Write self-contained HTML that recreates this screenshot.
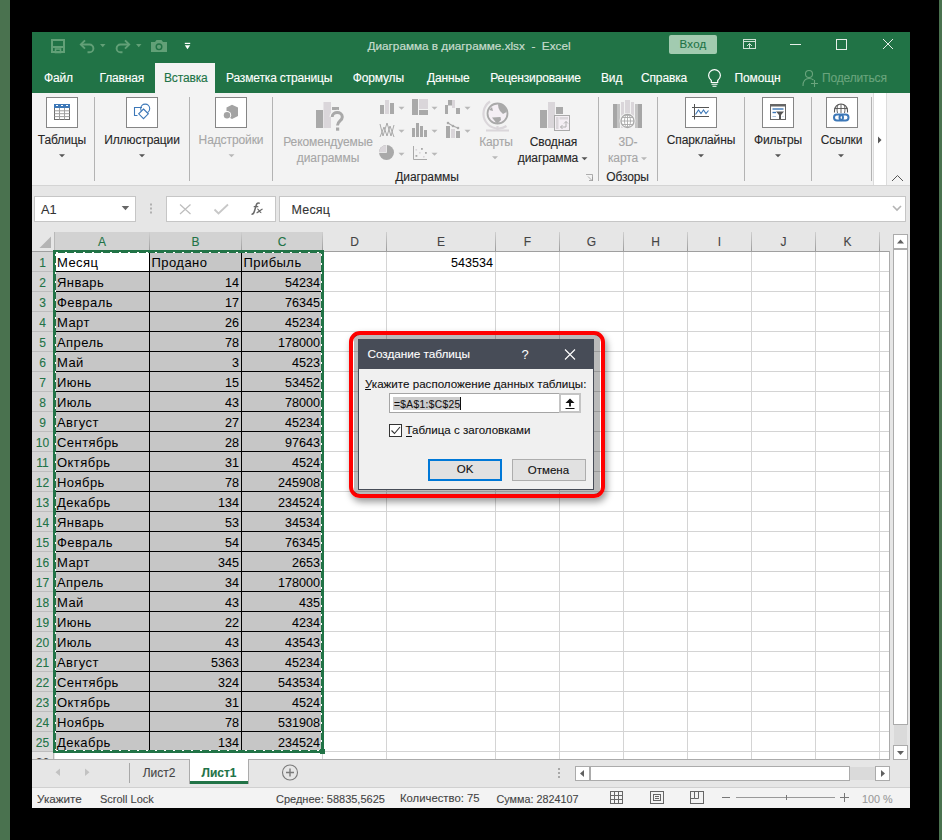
<!DOCTYPE html><html><head><meta charset="utf-8"><style>
*{margin:0;padding:0;box-sizing:border-box}
html,body{width:942px;height:840px;overflow:hidden}
body{background:#000;position:relative;font-family:"Liberation Sans",sans-serif;}
.a{position:absolute;white-space:pre}
.t{position:absolute;white-space:pre;line-height:1;-webkit-text-stroke:0.1px currentColor}
.b{-webkit-text-stroke:0.12px currentColor;letter-spacing:-0.15px}
svg{position:absolute;overflow:visible}
</style></head><body>
<div class="a" style="left:0;top:0;width:10px;height:840px;background:#4a724f"></div>
<div class="a" style="left:939px;top:0;width:3px;height:840px;background:#4a724f"></div>
<div class="a" style="left:32px;top:32px;width:878px;height:61px;background:#217346"></div>
<div class="a" style="left:32px;top:93px;width:878px;height:92px;background:#f3f3f3"></div>
<div class="a" style="left:32px;top:185px;width:878px;height:1px;background:#d4d4d4"></div>
<div class="a" style="left:32px;top:186px;width:878px;height:46px;background:#e6e6e6"></div>
<div class="a" style="left:32px;top:232px;width:878px;height:528px;background:#e6e6e6"></div>
<div class="a" style="left:32px;top:759px;width:878px;height:28px;background:#e6e6e6"></div>
<div class="a" style="left:32px;top:787px;width:878px;height:21px;background:#f3f3f3"></div>
<svg style="left:0;top:0" width="942" height="100"><rect x="52" y="40" width="12" height="12" fill="none" stroke="#62a077" stroke-width="2"/><rect x="52" y="46" width="12" height="2" fill="#62a077"/><rect x="55.5" y="49" width="5" height="3.5" fill="none" stroke="#62a077" stroke-width="1.6"/><path d="M81 44.5 H89.5 A3.9 3.9 0 0 1 89.5 52.3 H87.5" fill="none" stroke="#62a077" stroke-width="1.9"/><path d="M85 40.3 L80.8 44.5 L85 48.7" fill="none" stroke="#62a077" stroke-width="1.9"/><path d="M100 44 L105.5 44 L102.75 47.2 Z" fill="#62a077"/><path d="M129 44.5 H120.5 A3.9 3.9 0 0 0 120.5 52.3 H122.5" fill="none" stroke="#62a077" stroke-width="1.9"/><path d="M125 40.3 L129.2 44.5 L125 48.7" fill="none" stroke="#62a077" stroke-width="1.9"/><path d="M136 44 L141.5 44 L138.75 47.2 Z" fill="#62a077"/><path d="M151 42 H155 L156.5 40 H161.5 L163 42 H167 V52 H151 Z" fill="#62a077"/><circle cx="159" cy="46.8" r="2.8" fill="none" stroke="#217346" stroke-width="1.4"/><rect x="184.8" y="42.8" width="5.4" height="1.2" fill="#fff"/><path d="M184.8 45.2 H190.2 L187.5 49.3 Z" fill="#fff"/></svg>
<div class="t" style="top:39.55px;font-size:11.75px;color:#c7dccd;left:367.5px;-webkit-text-stroke:0.2px">Диаграмма в диаграмме.xlsx  -  Excel</div>
<div class="a" style="left:669px;top:35px;width:48px;height:19px;background:#a2cbb0;border-radius:2px"></div>
<div class="t" style="top:39.27px;font-size:11.5px;color:#217346;letter-spacing:0.3px;left:493px;width:400px;text-align:center;">Вход</div>
<svg style="left:0;top:0" width="942" height="100"><rect x="743.5" y="39.5" width="12" height="9" fill="none" stroke="#cfe2d5" stroke-width="1"/><path d="M743.5 41.5 H755.5" stroke="#cfe2d5" stroke-width="1"/><path d="M749.5 48.5 V43.5 M747 46 L749.5 43.5 L752 46" fill="none" stroke="#cfe2d5" stroke-width="1"/><path d="M790 44.5 H801" stroke="#e6efe9" stroke-width="1"/><rect x="836.5" y="39.5" width="10" height="10" fill="none" stroke="#e6efe9" stroke-width="1"/><path d="M883 39 L893 49 M893 39 L883 49" stroke="#e6efe9" stroke-width="1"/></svg>
<div class="t b" style="left:44px;top:72px;font-size:12px;color:#fff">Файл</div>
<div class="t b" style="left:99.5px;top:72px;font-size:12px;color:#fff">Главная</div>
<div class="t b" style="left:226px;top:72px;font-size:12px;color:#fff">Разметка страницы</div>
<div class="t b" style="left:352.7px;top:72px;font-size:12px;color:#fff">Формулы</div>
<div class="t b" style="left:427px;top:72px;font-size:12px;color:#fff">Данные</div>
<div class="t b" style="left:490.3px;top:72px;font-size:12px;color:#fff">Рецензирование</div>
<div class="t b" style="left:601px;top:72px;font-size:12px;color:#fff">Вид</div>
<div class="t b" style="left:641px;top:72px;font-size:12px;color:#fff">Справка</div>
<div class="t b" style="left:734.6px;top:72px;font-size:12px;color:#fff">Помощн</div>
<div class="a" style="left:155px;top:63px;width:60px;height:30px;background:#f3f3f3"></div>
<div class="t b" style="left:164px;top:72px;font-size:12px;color:#217346">Вставка</div>
<div class="t b" style="left:822px;top:72px;font-size:12px;color:#6aa57d">Поделиться</div>
<svg style="left:0;top:0" width="942" height="100"><path d="M711.3 80.5 C709.5 79 708.6 77.3 708.6 75.6 A5.9 5.9 0 0 1 720.4 75.6 C720.4 77.3 719.5 79 717.7 80.5 V82.5 H711.3 Z" fill="none" stroke="#fff" stroke-width="1.2"/><path d="M711.5 84.3 H717.5 M712.5 86.2 H716.5" stroke="#fff" stroke-width="1.1"/><circle cx="809" cy="74" r="3.5" fill="none" stroke="#6aa57d" stroke-width="1.1"/><path d="M803 86 C803 80 806 78.5 809 78.5 C811 78.5 812.5 79 813.5 80" fill="none" stroke="#6aa57d" stroke-width="1.1"/><path d="M811 83.5 H818 M814.5 80 V87" stroke="#6aa57d" stroke-width="1.1"/></svg>
<div class="a" style="left:46px;top:97px;width:32px;height:31px;background:#fff;border:1px solid #858585"></div>
<div class="t" style="top:133.84px;font-size:12px;color:#262626;letter-spacing:-0.1px;left:-138px;width:400px;text-align:center;">Таблицы</div>
<svg style="left:0;top:0" width="1" height="1"><path d="M59 154.2 H65 L62 157.2 Z" fill="#555"/></svg>
<div class="a" style="left:94px;top:97px;width:1px;height:84px;background:#b3b3b3;"></div>
<div class="a" style="left:126px;top:97px;width:32px;height:31px;background:#fff;border:1px solid #858585"></div>
<div class="t" style="top:133.84px;font-size:12px;color:#262626;letter-spacing:-0.1px;left:-58px;width:400px;text-align:center;">Иллюстрации</div>
<svg style="left:0;top:0" width="1" height="1"><path d="M139 154.2 H145 L142 157.2 Z" fill="#555"/></svg>
<div class="a" style="left:189px;top:97px;width:1px;height:84px;background:#b3b3b3;"></div>
<div class="a" style="left:215px;top:97px;width:32px;height:31px;background:#fff;border:1px solid #858585"></div>
<div class="t" style="top:133.84px;font-size:12px;color:#a6a6a6;letter-spacing:-0.1px;left:31px;width:400px;text-align:center;">Надстройки</div>
<svg style="left:0;top:0" width="1" height="1"><path d="M228.5 154.2 H234.5 L231.5 157.2 Z" fill="#b8b8b8"/></svg>
<div class="a" style="left:272px;top:97px;width:1px;height:84px;background:#b3b3b3;"></div>
<div class="t" style="top:135.84px;font-size:12px;color:#a6a6a6;letter-spacing:-0.1px;left:128px;width:400px;text-align:center;">Рекомендуемые</div>
<div class="t" style="top:151.84px;font-size:12px;color:#a6a6a6;letter-spacing:-0.1px;left:128px;width:400px;text-align:center;">диаграммы</div>
<div class="t" style="top:170.84px;font-size:12px;color:#262626;letter-spacing:-0.1px;left:227px;width:400px;text-align:center;">Диаграммы</div>
<div class="t" style="top:135.84px;font-size:12px;color:#a6a6a6;letter-spacing:-0.1px;left:296px;width:400px;text-align:center;">Карты</div>
<svg style="left:0;top:0" width="1" height="1"><path d="M492 156.2 H498 L495 159.2 Z" fill="#b8b8b8"/></svg>
<div class="t" style="top:135.84px;font-size:12px;color:#262626;letter-spacing:-0.1px;left:353.5px;width:400px;text-align:center;">Сводная</div>
<div class="t" style="top:151.84px;font-size:12px;color:#262626;letter-spacing:-0.1px;left:348px;width:400px;text-align:center;">диаграмма</div>
<svg style="left:0;top:0" width="1" height="1"><path d="M581.5 157.2 H587.5 L584.5 160.2 Z" fill="#555"/></svg>
<div class="a" style="left:598px;top:97px;width:1px;height:84px;background:#b3b3b3;"></div>
<div class="t" style="top:135.84px;font-size:12px;color:#a6a6a6;letter-spacing:-0.1px;left:428px;width:400px;text-align:center;">3D-</div>
<div class="t" style="top:151.84px;font-size:12px;color:#a6a6a6;letter-spacing:-0.1px;left:423px;width:400px;text-align:center;">карта</div>
<svg style="left:0;top:0" width="1" height="1"><path d="M641 157.2 H647 L644 160.2 Z" fill="#b8b8b8"/></svg>
<div class="t" style="top:170.84px;font-size:12px;color:#262626;letter-spacing:-0.1px;left:427.5px;width:400px;text-align:center;">Обзоры</div>
<div class="a" style="left:657px;top:97px;width:1px;height:84px;background:#b3b3b3;"></div>
<div class="a" style="left:685px;top:97px;width:32px;height:31px;background:#fff;border:1px solid #858585"></div>
<div class="t" style="top:133.84px;font-size:12px;color:#262626;letter-spacing:-0.1px;left:501px;width:400px;text-align:center;">Спарклайны</div>
<svg style="left:0;top:0" width="1" height="1"><path d="M698 154.2 H704 L701 157.2 Z" fill="#555"/></svg>
<div class="a" style="left:744px;top:97px;width:1px;height:84px;background:#b3b3b3;"></div>
<div class="a" style="left:762px;top:97px;width:32px;height:31px;background:#fff;border:1px solid #858585"></div>
<div class="t" style="top:133.84px;font-size:12px;color:#262626;letter-spacing:-0.1px;left:578px;width:400px;text-align:center;">Фильтры</div>
<svg style="left:0;top:0" width="1" height="1"><path d="M775 154.2 H781 L778 157.2 Z" fill="#555"/></svg>
<div class="a" style="left:811px;top:97px;width:1px;height:84px;background:#b3b3b3;"></div>
<div class="a" style="left:826px;top:97px;width:32px;height:31px;background:#fff;border:1px solid #858585"></div>
<div class="t" style="top:133.84px;font-size:12px;color:#262626;letter-spacing:-0.1px;left:641.5px;width:400px;text-align:center;">Ссылки</div>
<svg style="left:0;top:0" width="1" height="1"><path d="M838 154.2 H844 L841 157.2 Z" fill="#555"/></svg>
<div class="a" style="left:871px;top:97px;width:1px;height:84px;background:#b3b3b3;"></div>
<div class="a" style="left:873px;top:93px;width:14px;height:92px;background:#fff;border-left:1px solid #dcdcdc;border-right:1px solid #dcdcdc"></div>
<svg style="left:0;top:0" width="1" height="1"><path d="M878 136.5 L881.5 140 L878 143.5 Z" fill="#555"/><path d="M892 181 L897.5 175.5 L903 181" fill="none" stroke="#555" stroke-width="1"/><path d="M586 174.5 H592.5 V181 M588 176.5 L592 180.5 M589 180.5 H592.5 V177" fill="none" stroke="#9a9a9a" stroke-width="0.8"/></svg>
<svg style="left:0;top:0" width="1" height="1"><rect x="54.5" y="104.5" width="15" height="15" fill="#fff" stroke="#6b6b6b"/><rect x="54" y="104" width="16" height="4" fill="#3d78b8"/><path d="M54.5 110.8 H69.5 M54.5 113.7 H69.5 M54.5 116.6 H69.5 M59.5 108 V119.5 M64.5 108 V119.5" stroke="#a0a0a0" stroke-width="1"/><path d="M56 105.5 H58 M61 105.5 H63 M66 105.5 H68" stroke="#fff" stroke-width="1"/><path d="M142 107.5 H134.5 V115.5 H137.5" fill="none" stroke="#3d78b8" stroke-width="1.1"/><circle cx="145.2" cy="108.6" r="4.5" fill="none" stroke="#3d78b8" stroke-width="1.1"/><path d="M143.5 109 L148.3 113.8 L143.5 118.6 L138.7 113.8 Z" fill="#fff" stroke="#3d78b8" stroke-width="1.1"/><path d="M232 104.7 L238 107.5 L238 116 L232 119 L226.5 116 L226.5 107.5 Z" fill="#a3a3a3"/><circle cx="227" cy="115.3" r="4.2" fill="#fff"/><circle cx="227" cy="115.3" r="3.2" fill="#a3a3a3"/><rect x="316" y="110" width="7" height="18" fill="#a9a9a9"/><rect x="323.5" y="102" width="7.5" height="26" fill="#dad6da"/><rect x="332" y="107" width="7" height="3" fill="#a9a9a9"/><path d="M332.2 117 C332.2 111 342.3 111 342.3 117 C342.3 121 337.5 121 337.5 125.5" fill="none" stroke="#f3f3f3" stroke-width="5.5"/><path d="M332.2 117 C332.2 111 342.3 111 342.3 117 C342.3 121 337.5 121 337.5 125.5" fill="none" stroke="#a9a9a9" stroke-width="3"/><rect x="336" y="127.5" width="3.2" height="3.2" fill="#a9a9a9"/><rect x="380" y="105" width="4" height="9" fill="#a9a9a9"/><rect x="385" y="100" width="4" height="14" fill="#dad6da"/><rect x="390" y="103" width="4" height="11" fill="#a9a9a9"/><rect x="412" y="99" width="6" height="16" fill="#a9a9a9"/><rect x="419" y="99" width="9" height="10" fill="#dad6da"/><rect x="419" y="110" width="9" height="5" fill="#a9a9a9"/><rect x="445" y="105" width="3" height="9" fill="#a9a9a9"/><rect x="448" y="100" width="4" height="5" fill="#a9a9a9"/><rect x="452" y="100" width="3" height="8" fill="#dad6da"/><rect x="456" y="108" width="4" height="6" fill="#a9a9a9"/><path d="M448 105 H452" stroke="#a9a9a9"/><path d="M380 124 L383 136 L387 123 L391 136 L394 125 M380 137 L384 127 L387 136 L390 126 L394 137" fill="none" stroke="#a9a9a9" stroke-width="1"/><rect x="412" y="128" width="3" height="9" fill="#a9a9a9"/><rect x="416" y="123" width="3" height="14" fill="#a9a9a9"/><rect x="420" y="126" width="3" height="11" fill="#a9a9a9"/><rect x="424" y="130" width="3" height="7" fill="#a9a9a9"/><rect x="446" y="126" width="4" height="12" fill="#a9a9a9"/><rect x="451" y="129" width="4" height="9" fill="#dad6da"/><rect x="456" y="131" width="4" height="7" fill="#a9a9a9"/><path d="M448 123 L453 126 L458 128" fill="none" stroke="#a9a9a9" stroke-width="1.2"/><circle cx="448" cy="123" r="1.3" fill="#a9a9a9"/><circle cx="453" cy="126" r="1.3" fill="#a9a9a9"/><circle cx="458" cy="128" r="1.3" fill="#a9a9a9"/><circle cx="386.5" cy="152.5" r="7.5" fill="#a9a9a9"/><path d="M386.5 152.5 V145 A7.5 7.5 0 0 0 379 152.5 Z" fill="#dad6da"/><path d="M386.5 145 V152.5 H379" fill="none" stroke="#f3f3f3" stroke-width="0.8"/><path d="M413.5 146 V159.5 H427" fill="none" stroke="#a9a9a9" stroke-width="1"/><rect x="415.5" y="149" width="1.6" height="1.6" fill="#dad6da"/><rect x="421" y="148" width="1.8" height="1.8" fill="#a9a9a9"/><rect x="419" y="152" width="1.6" height="1.6" fill="#dad6da"/><rect x="425" y="152" width="1.8" height="1.8" fill="#a9a9a9"/><rect x="415.5" y="155" width="1.8" height="1.8" fill="#a9a9a9"/><rect x="423" y="156" width="1.6" height="1.6" fill="#dad6da"/><path d="M490 101.5 A14 14 0 0 0 506.5 126" fill="none" stroke="#dad6da" stroke-width="2.2"/><circle cx="497.5" cy="113.5" r="10" fill="#f4eff4" stroke="#a9a9a9" stroke-width="1.8"/><path d="M498 104.5 C502 103.5 506.5 107 506.5 112 L503 114 L500 111 L498.5 108 Z" fill="#a9a9a9"/><path d="M492 117.5 L500.5 117 L501 120 L497.5 123.5 L495.5 122 Z" fill="#a9a9a9"/><path d="M489 110 L492 107 L493 111 Z" fill="#a9a9a9"/><path d="M497.5 126 V130 M486 130.5 H509" stroke="#dad6da" stroke-width="2.2"/><rect x="540" y="110" width="7" height="18" fill="#a9a9a9"/><rect x="548" y="102" width="7" height="26" fill="#dad6da"/><rect x="556" y="107" width="7" height="7" fill="#a9a9a9"/><rect x="554.5" y="115.5" width="15" height="15" fill="#f4eff4" stroke="#a9a9a9" stroke-width="1"/><rect x="556" y="117" width="2.5" height="12" fill="#dad6da"/><rect x="559.5" y="117" width="8.5" height="2.5" fill="#dad6da"/><path d="M560.5 127 H566 V121.5 M564 123.5 L566 121.5 L568 123.5 M562.5 125 L560.5 127 L562.5 129" fill="none" stroke="#a9a9a9" stroke-width="0.9"/><rect x="613" y="104" width="4" height="24" fill="#a6a6a6"/><rect x="617" y="104" width="3" height="24" fill="#c4c4c4"/><rect x="621" y="102" width="3" height="26" fill="#dad6da"/><rect x="625" y="100" width="5" height="22" fill="#dad6da"/><rect x="631" y="102" width="3" height="22" fill="#dad6da"/><rect x="635" y="104" width="3" height="24" fill="#c4c4c4"/><rect x="638" y="104" width="4" height="24" fill="#a6a6a6"/><circle cx="627.5" cy="121" r="8" fill="#f3f3f3"/><circle cx="627.5" cy="121" r="6.5" fill="#fff" stroke="#a9a9a9" stroke-width="1.3"/><path d="M621 121 H634 M622 117.5 H633 M622 124.5 H633 M627.5 114.5 V127.5" stroke="#a9a9a9" stroke-width="0.9"/><ellipse cx="627.5" cy="121" rx="3" ry="6.5" fill="none" stroke="#a9a9a9" stroke-width="0.9"/><path d="M694.5 104 V119.5 M692 107.5 H709 M692 116.5 H709" fill="none" stroke="#555" stroke-width="1"/><path d="M695.5 114.5 L698.5 110 L701 113.5 L703.5 110 L706 113.5 L708.5 110.5" fill="none" stroke="#3d78b8" stroke-width="1.1"/><rect x="770.5" y="104.5" width="15" height="15" fill="#fff" stroke="#666" stroke-width="1"/><rect x="770" y="104" width="16" height="2.5" fill="#666"/><path d="M772.5 109 H783.5" stroke="#3d78b8" stroke-width="1.4"/><path d="M772.5 112.5 H776" stroke="#3d78b8" stroke-width="1.4"/><path d="M772.5 116.5 H776 M782.5 116.5 H783.5" stroke="#a8c2e0" stroke-width="1.1"/><path d="M776 111.5 H784 L781 115 V119 H779 V115 Z" fill="#555"/><path d="M834.5 112.5 V110.5 A6.5 6.5 0 0 1 847.5 110.5 V112.5" fill="#fff" stroke="#555" stroke-width="1.1"/><path d="M834.5 108.5 H847.5 M841 104 V113 M838 104.8 C836.8 107.5 836.8 110 837.5 113 M844 104.8 C845.2 107.5 845.2 110 844.5 113" fill="none" stroke="#555" stroke-width="0.9"/><rect x="834" y="114.5" width="9" height="6" rx="3" fill="none" stroke="#3d78b8" stroke-width="2"/><rect x="839.5" y="114.5" width="9" height="6" rx="3" fill="none" stroke="#3d78b8" stroke-width="2"/></svg>
<svg style="left:0;top:0" width="1" height="1"><path d="M398.5 106.7 H404.5 L401.5 109.7 Z" fill="#b8b8b8"/></svg>
<svg style="left:0;top:0" width="1" height="1"><path d="M431.5 106.7 H437.5 L434.5 109.7 Z" fill="#b8b8b8"/></svg>
<svg style="left:0;top:0" width="1" height="1"><path d="M464.5 106.7 H470.5 L467.5 109.7 Z" fill="#b8b8b8"/></svg>
<svg style="left:0;top:0" width="1" height="1"><path d="M398.5 129.7 H404.5 L401.5 132.7 Z" fill="#b8b8b8"/></svg>
<svg style="left:0;top:0" width="1" height="1"><path d="M431.5 129.7 H437.5 L434.5 132.7 Z" fill="#b8b8b8"/></svg>
<svg style="left:0;top:0" width="1" height="1"><path d="M464.5 129.7 H470.5 L467.5 132.7 Z" fill="#b8b8b8"/></svg>
<svg style="left:0;top:0" width="1" height="1"><path d="M398.5 152.7 H404.5 L401.5 155.7 Z" fill="#b8b8b8"/></svg>
<svg style="left:0;top:0" width="1" height="1"><path d="M431.5 152.7 H437.5 L434.5 155.7 Z" fill="#b8b8b8"/></svg>
<div class="a" style="left:34px;top:196px;width:102px;height:26px;background:#fff;border:1px solid #c6c6c6"></div>
<div class="t" style="top:203.86px;font-size:12.8px;color:#333;left:41px;">A1</div>
<svg style="left:0;top:0" width="1" height="1"><path d="M121.7 206 H129.2 L125.45 210.2 Z" fill="#666"/><rect x="150" y="203.5" width="2" height="2" fill="#b0b0b0"/><rect x="150" y="207.5" width="2" height="2" fill="#b0b0b0"/><rect x="150" y="211.5" width="2" height="2" fill="#b0b0b0"/></svg>
<div class="a" style="left:166px;top:196px;width:110px;height:26px;background:#fff;border:1px solid #c6c6c6"></div>
<div class="a" style="left:279px;top:196px;width:627px;height:26px;background:#fff;border:1px solid #c6c6c6"></div>
<svg style="left:0;top:0" width="1" height="1"><path d="M180 204.5 L190.5 214 M190.5 204.5 L180 214" stroke="#bdbdbd" stroke-width="1.2"/><path d="M214.5 209.5 L218.5 213.5 L228 204.5" fill="none" stroke="#c8c8c8" stroke-width="1.8"/><path d="M893 206 L897 210 L901 206" fill="none" stroke="#b4b4b4" stroke-width="1.6"/></svg>
<svg style="left:0;top:0" width="1" height="1"><path d="M251.5 214.3 C253.3 214.5 253.9 213.3 254.4 211.3 L256.3 205 C256.8 203.3 258 202.7 259.8 203.4" fill="none" stroke="#6a6a6a" stroke-width="1.5"/><path d="M253.7 206.6 H258.3" stroke="#6a6a6a" stroke-width="1.3"/><path d="M257.3 209.2 C258.8 208.8 259.6 212.6 261.3 212.6 M262.6 209 C261 209.6 258.5 212.2 256.6 212.8" fill="none" stroke="#6a6a6a" stroke-width="1.3"/></svg>
<div class="t" style="top:203.92px;font-size:12.5px;color:#333;letter-spacing:0.2px;left:291.5px;">Месяц</div>
<div class="a" style="left:32px;top:232px;width:857px;height:19px;background:#e6e6e6;"></div>
<div class="a" style="left:55px;top:232px;width:267px;height:18px;background:#d2d2d2;"></div>
<div class="a" style="left:32px;top:251px;width:857px;height:1px;background:#9f9f9f;"></div>
<div class="a" style="left:149px;top:232px;width:1px;height:19px;background:linear-gradient(#cfcfcf,#9c9c9c);"></div>
<div class="a" style="left:241px;top:232px;width:1px;height:19px;background:linear-gradient(#cfcfcf,#9c9c9c);"></div>
<div class="a" style="left:322px;top:232px;width:1px;height:19px;background:linear-gradient(#cfcfcf,#9c9c9c);"></div>
<div class="a" style="left:386px;top:232px;width:1px;height:19px;background:linear-gradient(#cfcfcf,#9c9c9c);"></div>
<div class="a" style="left:495px;top:232px;width:1px;height:19px;background:linear-gradient(#cfcfcf,#9c9c9c);"></div>
<div class="a" style="left:559px;top:232px;width:1px;height:19px;background:linear-gradient(#cfcfcf,#9c9c9c);"></div>
<div class="a" style="left:623px;top:232px;width:1px;height:19px;background:linear-gradient(#cfcfcf,#9c9c9c);"></div>
<div class="a" style="left:687px;top:232px;width:1px;height:19px;background:linear-gradient(#cfcfcf,#9c9c9c);"></div>
<div class="a" style="left:751px;top:232px;width:1px;height:19px;background:linear-gradient(#cfcfcf,#9c9c9c);"></div>
<div class="a" style="left:815px;top:232px;width:1px;height:19px;background:linear-gradient(#cfcfcf,#9c9c9c);"></div>
<div class="a" style="left:879px;top:232px;width:1px;height:19px;background:linear-gradient(#cfcfcf,#9c9c9c);"></div>
<div class="a" style="left:54px;top:232px;width:1px;height:20px;background:#b9b9b9;"></div>
<div class="t" style="top:235.84px;font-size:12px;color:#217346;left:-98.0px;width:400px;text-align:center;-webkit-text-stroke:0.1px">A</div>
<div class="t" style="top:235.84px;font-size:12px;color:#217346;left:-4.5px;width:400px;text-align:center;-webkit-text-stroke:0.1px">B</div>
<div class="t" style="top:235.84px;font-size:12px;color:#217346;left:82.0px;width:400px;text-align:center;-webkit-text-stroke:0.1px">C</div>
<div class="t" style="top:235.84px;font-size:12px;color:#444;left:154.5px;width:400px;text-align:center;-webkit-text-stroke:0.1px">D</div>
<div class="t" style="top:235.84px;font-size:12px;color:#444;left:241.0px;width:400px;text-align:center;-webkit-text-stroke:0.1px">E</div>
<div class="t" style="top:235.84px;font-size:12px;color:#444;left:327.5px;width:400px;text-align:center;-webkit-text-stroke:0.1px">F</div>
<div class="t" style="top:235.84px;font-size:12px;color:#444;left:391.5px;width:400px;text-align:center;-webkit-text-stroke:0.1px">G</div>
<div class="t" style="top:235.84px;font-size:12px;color:#444;left:455.5px;width:400px;text-align:center;-webkit-text-stroke:0.1px">H</div>
<div class="t" style="top:235.84px;font-size:12px;color:#444;left:519.5px;width:400px;text-align:center;-webkit-text-stroke:0.1px">I</div>
<div class="t" style="top:235.84px;font-size:12px;color:#444;left:583.5px;width:400px;text-align:center;-webkit-text-stroke:0.1px">J</div>
<div class="t" style="top:235.84px;font-size:12px;color:#444;left:647.5px;width:400px;text-align:center;-webkit-text-stroke:0.1px">K</div>
<svg style="left:0;top:0" width="1" height="1"><path d="M51 236.5 V248 H39.5 Z" fill="#b4b4b4"/></svg>
<div class="a" style="left:32px;top:252px;width:22px;height:508px;background:#e6e6e6;"></div>
<div class="a" style="left:32px;top:252px;width:21px;height:499px;background:#d6d6d6;"></div>
<div class="a" style="left:53px;top:252px;width:1px;height:507px;background:#b9b9b9;"></div>
<div class="a" style="left:55px;top:252px;width:834px;height:507px;background:#fff;"></div>
<div class="a" style="left:55px;top:252px;width:267px;height:499px;background:#c6c6c6;"></div>
<div class="a" style="left:55px;top:252px;width:94px;height:19px;background:#fff;"></div>
<div class="a" style="left:32px;top:271px;width:21px;height:1px;background:#bdbdbd;"></div>
<div class="a" style="left:55px;top:271px;width:834px;height:1px;background:#d4d4d4;"></div>
<div class="a" style="left:32px;top:291px;width:21px;height:1px;background:#bdbdbd;"></div>
<div class="a" style="left:55px;top:291px;width:834px;height:1px;background:#d4d4d4;"></div>
<div class="a" style="left:32px;top:311px;width:21px;height:1px;background:#bdbdbd;"></div>
<div class="a" style="left:55px;top:311px;width:834px;height:1px;background:#d4d4d4;"></div>
<div class="a" style="left:32px;top:331px;width:21px;height:1px;background:#bdbdbd;"></div>
<div class="a" style="left:55px;top:331px;width:834px;height:1px;background:#d4d4d4;"></div>
<div class="a" style="left:32px;top:351px;width:21px;height:1px;background:#bdbdbd;"></div>
<div class="a" style="left:55px;top:351px;width:834px;height:1px;background:#d4d4d4;"></div>
<div class="a" style="left:32px;top:371px;width:21px;height:1px;background:#bdbdbd;"></div>
<div class="a" style="left:55px;top:371px;width:834px;height:1px;background:#d4d4d4;"></div>
<div class="a" style="left:32px;top:391px;width:21px;height:1px;background:#bdbdbd;"></div>
<div class="a" style="left:55px;top:391px;width:834px;height:1px;background:#d4d4d4;"></div>
<div class="a" style="left:32px;top:411px;width:21px;height:1px;background:#bdbdbd;"></div>
<div class="a" style="left:55px;top:411px;width:834px;height:1px;background:#d4d4d4;"></div>
<div class="a" style="left:32px;top:431px;width:21px;height:1px;background:#bdbdbd;"></div>
<div class="a" style="left:55px;top:431px;width:834px;height:1px;background:#d4d4d4;"></div>
<div class="a" style="left:32px;top:451px;width:21px;height:1px;background:#bdbdbd;"></div>
<div class="a" style="left:55px;top:451px;width:834px;height:1px;background:#d4d4d4;"></div>
<div class="a" style="left:32px;top:471px;width:21px;height:1px;background:#bdbdbd;"></div>
<div class="a" style="left:55px;top:471px;width:834px;height:1px;background:#d4d4d4;"></div>
<div class="a" style="left:32px;top:491px;width:21px;height:1px;background:#bdbdbd;"></div>
<div class="a" style="left:55px;top:491px;width:834px;height:1px;background:#d4d4d4;"></div>
<div class="a" style="left:32px;top:511px;width:21px;height:1px;background:#bdbdbd;"></div>
<div class="a" style="left:55px;top:511px;width:834px;height:1px;background:#d4d4d4;"></div>
<div class="a" style="left:32px;top:531px;width:21px;height:1px;background:#bdbdbd;"></div>
<div class="a" style="left:55px;top:531px;width:834px;height:1px;background:#d4d4d4;"></div>
<div class="a" style="left:32px;top:551px;width:21px;height:1px;background:#bdbdbd;"></div>
<div class="a" style="left:55px;top:551px;width:834px;height:1px;background:#d4d4d4;"></div>
<div class="a" style="left:32px;top:571px;width:21px;height:1px;background:#bdbdbd;"></div>
<div class="a" style="left:55px;top:571px;width:834px;height:1px;background:#d4d4d4;"></div>
<div class="a" style="left:32px;top:591px;width:21px;height:1px;background:#bdbdbd;"></div>
<div class="a" style="left:55px;top:591px;width:834px;height:1px;background:#d4d4d4;"></div>
<div class="a" style="left:32px;top:611px;width:21px;height:1px;background:#bdbdbd;"></div>
<div class="a" style="left:55px;top:611px;width:834px;height:1px;background:#d4d4d4;"></div>
<div class="a" style="left:32px;top:631px;width:21px;height:1px;background:#bdbdbd;"></div>
<div class="a" style="left:55px;top:631px;width:834px;height:1px;background:#d4d4d4;"></div>
<div class="a" style="left:32px;top:651px;width:21px;height:1px;background:#bdbdbd;"></div>
<div class="a" style="left:55px;top:651px;width:834px;height:1px;background:#d4d4d4;"></div>
<div class="a" style="left:32px;top:671px;width:21px;height:1px;background:#bdbdbd;"></div>
<div class="a" style="left:55px;top:671px;width:834px;height:1px;background:#d4d4d4;"></div>
<div class="a" style="left:32px;top:691px;width:21px;height:1px;background:#bdbdbd;"></div>
<div class="a" style="left:55px;top:691px;width:834px;height:1px;background:#d4d4d4;"></div>
<div class="a" style="left:32px;top:711px;width:21px;height:1px;background:#bdbdbd;"></div>
<div class="a" style="left:55px;top:711px;width:834px;height:1px;background:#d4d4d4;"></div>
<div class="a" style="left:32px;top:731px;width:21px;height:1px;background:#bdbdbd;"></div>
<div class="a" style="left:55px;top:731px;width:834px;height:1px;background:#d4d4d4;"></div>
<div class="a" style="left:32px;top:751px;width:21px;height:1px;background:#bdbdbd;"></div>
<div class="a" style="left:55px;top:751px;width:834px;height:1px;background:#d4d4d4;"></div>
<div class="a" style="left:322px;top:252px;width:1px;height:507px;background:#d4d4d4;"></div>
<div class="a" style="left:386px;top:252px;width:1px;height:507px;background:#d4d4d4;"></div>
<div class="a" style="left:495px;top:252px;width:1px;height:507px;background:#d4d4d4;"></div>
<div class="a" style="left:559px;top:252px;width:1px;height:507px;background:#d4d4d4;"></div>
<div class="a" style="left:623px;top:252px;width:1px;height:507px;background:#d4d4d4;"></div>
<div class="a" style="left:687px;top:252px;width:1px;height:507px;background:#d4d4d4;"></div>
<div class="a" style="left:751px;top:252px;width:1px;height:507px;background:#d4d4d4;"></div>
<div class="a" style="left:815px;top:252px;width:1px;height:507px;background:#d4d4d4;"></div>
<div class="a" style="left:879px;top:252px;width:1px;height:507px;background:#d4d4d4;"></div>
<div class="a" style="left:55px;top:271px;width:267px;height:1px;background:#000;"></div>
<div class="a" style="left:55px;top:291px;width:267px;height:1px;background:#000;"></div>
<div class="a" style="left:55px;top:311px;width:267px;height:1px;background:#000;"></div>
<div class="a" style="left:55px;top:331px;width:267px;height:1px;background:#000;"></div>
<div class="a" style="left:55px;top:351px;width:267px;height:1px;background:#000;"></div>
<div class="a" style="left:55px;top:371px;width:267px;height:1px;background:#000;"></div>
<div class="a" style="left:55px;top:391px;width:267px;height:1px;background:#000;"></div>
<div class="a" style="left:55px;top:411px;width:267px;height:1px;background:#000;"></div>
<div class="a" style="left:55px;top:431px;width:267px;height:1px;background:#000;"></div>
<div class="a" style="left:55px;top:451px;width:267px;height:1px;background:#000;"></div>
<div class="a" style="left:55px;top:471px;width:267px;height:1px;background:#000;"></div>
<div class="a" style="left:55px;top:491px;width:267px;height:1px;background:#000;"></div>
<div class="a" style="left:55px;top:511px;width:267px;height:1px;background:#000;"></div>
<div class="a" style="left:55px;top:531px;width:267px;height:1px;background:#000;"></div>
<div class="a" style="left:55px;top:551px;width:267px;height:1px;background:#000;"></div>
<div class="a" style="left:55px;top:571px;width:267px;height:1px;background:#000;"></div>
<div class="a" style="left:55px;top:591px;width:267px;height:1px;background:#000;"></div>
<div class="a" style="left:55px;top:611px;width:267px;height:1px;background:#000;"></div>
<div class="a" style="left:55px;top:631px;width:267px;height:1px;background:#000;"></div>
<div class="a" style="left:55px;top:651px;width:267px;height:1px;background:#000;"></div>
<div class="a" style="left:55px;top:671px;width:267px;height:1px;background:#000;"></div>
<div class="a" style="left:55px;top:691px;width:267px;height:1px;background:#000;"></div>
<div class="a" style="left:55px;top:711px;width:267px;height:1px;background:#000;"></div>
<div class="a" style="left:55px;top:731px;width:267px;height:1px;background:#000;"></div>
<div class="a" style="left:149px;top:252px;width:1px;height:499px;background:#000;"></div>
<div class="a" style="left:241px;top:252px;width:1px;height:499px;background:#000;"></div>
<div class="a" style="left:889px;top:251px;width:1px;height:509px;background:#ababab;"></div>
<div class="a" style="left:32px;top:759px;width:858px;height:1px;background:#ababab;"></div>
<div class="a" style="left:0;top:0;width:942px;height:759px;overflow:hidden">
<div class="t" style="top:256.84px;font-size:12px;color:#217346;left:-157.5px;width:400px;text-align:center;-webkit-text-stroke:0.1px">1</div>
<div class="t" style="top:276.84px;font-size:12px;color:#217346;left:-157.5px;width:400px;text-align:center;-webkit-text-stroke:0.1px">2</div>
<div class="t" style="top:296.84px;font-size:12px;color:#217346;left:-157.5px;width:400px;text-align:center;-webkit-text-stroke:0.1px">3</div>
<div class="t" style="top:316.84px;font-size:12px;color:#217346;left:-157.5px;width:400px;text-align:center;-webkit-text-stroke:0.1px">4</div>
<div class="t" style="top:336.84px;font-size:12px;color:#217346;left:-157.5px;width:400px;text-align:center;-webkit-text-stroke:0.1px">5</div>
<div class="t" style="top:356.84px;font-size:12px;color:#217346;left:-157.5px;width:400px;text-align:center;-webkit-text-stroke:0.1px">6</div>
<div class="t" style="top:376.84px;font-size:12px;color:#217346;left:-157.5px;width:400px;text-align:center;-webkit-text-stroke:0.1px">7</div>
<div class="t" style="top:396.84px;font-size:12px;color:#217346;left:-157.5px;width:400px;text-align:center;-webkit-text-stroke:0.1px">8</div>
<div class="t" style="top:416.84px;font-size:12px;color:#217346;left:-157.5px;width:400px;text-align:center;-webkit-text-stroke:0.1px">9</div>
<div class="t" style="top:436.84px;font-size:12px;color:#217346;left:-157.5px;width:400px;text-align:center;-webkit-text-stroke:0.1px">10</div>
<div class="t" style="top:456.84px;font-size:12px;color:#217346;left:-157.5px;width:400px;text-align:center;-webkit-text-stroke:0.1px">11</div>
<div class="t" style="top:476.84px;font-size:12px;color:#217346;left:-157.5px;width:400px;text-align:center;-webkit-text-stroke:0.1px">12</div>
<div class="t" style="top:496.84px;font-size:12px;color:#217346;left:-157.5px;width:400px;text-align:center;-webkit-text-stroke:0.1px">13</div>
<div class="t" style="top:516.84px;font-size:12px;color:#217346;left:-157.5px;width:400px;text-align:center;-webkit-text-stroke:0.1px">14</div>
<div class="t" style="top:536.84px;font-size:12px;color:#217346;left:-157.5px;width:400px;text-align:center;-webkit-text-stroke:0.1px">15</div>
<div class="t" style="top:556.84px;font-size:12px;color:#217346;left:-157.5px;width:400px;text-align:center;-webkit-text-stroke:0.1px">16</div>
<div class="t" style="top:576.84px;font-size:12px;color:#217346;left:-157.5px;width:400px;text-align:center;-webkit-text-stroke:0.1px">17</div>
<div class="t" style="top:596.84px;font-size:12px;color:#217346;left:-157.5px;width:400px;text-align:center;-webkit-text-stroke:0.1px">18</div>
<div class="t" style="top:616.84px;font-size:12px;color:#217346;left:-157.5px;width:400px;text-align:center;-webkit-text-stroke:0.1px">19</div>
<div class="t" style="top:636.84px;font-size:12px;color:#217346;left:-157.5px;width:400px;text-align:center;-webkit-text-stroke:0.1px">20</div>
<div class="t" style="top:656.84px;font-size:12px;color:#217346;left:-157.5px;width:400px;text-align:center;-webkit-text-stroke:0.1px">21</div>
<div class="t" style="top:676.84px;font-size:12px;color:#217346;left:-157.5px;width:400px;text-align:center;-webkit-text-stroke:0.1px">22</div>
<div class="t" style="top:696.84px;font-size:12px;color:#217346;left:-157.5px;width:400px;text-align:center;-webkit-text-stroke:0.1px">23</div>
<div class="t" style="top:716.84px;font-size:12px;color:#217346;left:-157.5px;width:400px;text-align:center;-webkit-text-stroke:0.1px">24</div>
<div class="t" style="top:736.84px;font-size:12px;color:#217346;left:-157.5px;width:400px;text-align:center;-webkit-text-stroke:0.1px">25</div>
<div class="t" style="top:756.84px;font-size:12px;color:#444;left:-157.5px;width:400px;text-align:center;-webkit-text-stroke:0.1px">26</div>
</div>
<div class="a" style="left:55px;top:252px;width:834px;height:507px;overflow:hidden">
<div class="t" style="left:2px;top:4.00px;font-size:13px;color:#000;letter-spacing:0.45px;-webkit-text-stroke:0">Месяц</div>
<div class="t" style="left:96.5px;top:4.00px;font-size:13px;color:#000;letter-spacing:0.45px;-webkit-text-stroke:0">Продано</div>
<div class="t" style="left:188.5px;top:4.00px;font-size:13px;color:#000;letter-spacing:0.45px;-webkit-text-stroke:0">Прибыль</div>
<div class="t" style="left:2px;top:24.00px;font-size:13px;color:#000;letter-spacing:0.45px;-webkit-text-stroke:0">Январь</div>
<div class="t" style="left:-216px;width:400px;text-align:right;top:25.33px;font-size:12.6px;color:#000;-webkit-text-stroke:0.05px">14</div>
<div class="t" style="left:-135px;width:400px;text-align:right;top:25.33px;font-size:12.6px;color:#000;-webkit-text-stroke:0.05px">54234</div>
<div class="t" style="left:2px;top:44.00px;font-size:13px;color:#000;letter-spacing:0.45px;-webkit-text-stroke:0">Февраль</div>
<div class="t" style="left:-216px;width:400px;text-align:right;top:45.33px;font-size:12.6px;color:#000;-webkit-text-stroke:0.05px">17</div>
<div class="t" style="left:-135px;width:400px;text-align:right;top:45.33px;font-size:12.6px;color:#000;-webkit-text-stroke:0.05px">76345</div>
<div class="t" style="left:2px;top:64.00px;font-size:13px;color:#000;letter-spacing:0.45px;-webkit-text-stroke:0">Март</div>
<div class="t" style="left:-216px;width:400px;text-align:right;top:65.33px;font-size:12.6px;color:#000;-webkit-text-stroke:0.05px">26</div>
<div class="t" style="left:-135px;width:400px;text-align:right;top:65.33px;font-size:12.6px;color:#000;-webkit-text-stroke:0.05px">45234</div>
<div class="t" style="left:2px;top:84.00px;font-size:13px;color:#000;letter-spacing:0.45px;-webkit-text-stroke:0">Апрель</div>
<div class="t" style="left:-216px;width:400px;text-align:right;top:85.33px;font-size:12.6px;color:#000;-webkit-text-stroke:0.05px">78</div>
<div class="t" style="left:-135px;width:400px;text-align:right;top:85.33px;font-size:12.6px;color:#000;-webkit-text-stroke:0.05px">178000</div>
<div class="t" style="left:2px;top:104.00px;font-size:13px;color:#000;letter-spacing:0.45px;-webkit-text-stroke:0">Май</div>
<div class="t" style="left:-216px;width:400px;text-align:right;top:105.33px;font-size:12.6px;color:#000;-webkit-text-stroke:0.05px">3</div>
<div class="t" style="left:-135px;width:400px;text-align:right;top:105.33px;font-size:12.6px;color:#000;-webkit-text-stroke:0.05px">4523</div>
<div class="t" style="left:2px;top:124.00px;font-size:13px;color:#000;letter-spacing:0.45px;-webkit-text-stroke:0">Июнь</div>
<div class="t" style="left:-216px;width:400px;text-align:right;top:125.33px;font-size:12.6px;color:#000;-webkit-text-stroke:0.05px">15</div>
<div class="t" style="left:-135px;width:400px;text-align:right;top:125.33px;font-size:12.6px;color:#000;-webkit-text-stroke:0.05px">53452</div>
<div class="t" style="left:2px;top:144.00px;font-size:13px;color:#000;letter-spacing:0.45px;-webkit-text-stroke:0">Июль</div>
<div class="t" style="left:-216px;width:400px;text-align:right;top:145.33px;font-size:12.6px;color:#000;-webkit-text-stroke:0.05px">43</div>
<div class="t" style="left:-135px;width:400px;text-align:right;top:145.33px;font-size:12.6px;color:#000;-webkit-text-stroke:0.05px">78000</div>
<div class="t" style="left:2px;top:164.00px;font-size:13px;color:#000;letter-spacing:0.45px;-webkit-text-stroke:0">Август</div>
<div class="t" style="left:-216px;width:400px;text-align:right;top:165.33px;font-size:12.6px;color:#000;-webkit-text-stroke:0.05px">27</div>
<div class="t" style="left:-135px;width:400px;text-align:right;top:165.33px;font-size:12.6px;color:#000;-webkit-text-stroke:0.05px">45234</div>
<div class="t" style="left:2px;top:184.00px;font-size:13px;color:#000;letter-spacing:0.45px;-webkit-text-stroke:0">Сентябрь</div>
<div class="t" style="left:-216px;width:400px;text-align:right;top:185.33px;font-size:12.6px;color:#000;-webkit-text-stroke:0.05px">28</div>
<div class="t" style="left:-135px;width:400px;text-align:right;top:185.33px;font-size:12.6px;color:#000;-webkit-text-stroke:0.05px">97643</div>
<div class="t" style="left:2px;top:204.00px;font-size:13px;color:#000;letter-spacing:0.45px;-webkit-text-stroke:0">Октябрь</div>
<div class="t" style="left:-216px;width:400px;text-align:right;top:205.33px;font-size:12.6px;color:#000;-webkit-text-stroke:0.05px">31</div>
<div class="t" style="left:-135px;width:400px;text-align:right;top:205.33px;font-size:12.6px;color:#000;-webkit-text-stroke:0.05px">4524</div>
<div class="t" style="left:2px;top:224.00px;font-size:13px;color:#000;letter-spacing:0.45px;-webkit-text-stroke:0">Ноябрь</div>
<div class="t" style="left:-216px;width:400px;text-align:right;top:225.33px;font-size:12.6px;color:#000;-webkit-text-stroke:0.05px">78</div>
<div class="t" style="left:-135px;width:400px;text-align:right;top:225.33px;font-size:12.6px;color:#000;-webkit-text-stroke:0.05px">245908</div>
<div class="t" style="left:2px;top:244.00px;font-size:13px;color:#000;letter-spacing:0.45px;-webkit-text-stroke:0">Декабрь</div>
<div class="t" style="left:-216px;width:400px;text-align:right;top:245.33px;font-size:12.6px;color:#000;-webkit-text-stroke:0.05px">134</div>
<div class="t" style="left:-135px;width:400px;text-align:right;top:245.33px;font-size:12.6px;color:#000;-webkit-text-stroke:0.05px">234524</div>
<div class="t" style="left:2px;top:264.00px;font-size:13px;color:#000;letter-spacing:0.45px;-webkit-text-stroke:0">Январь</div>
<div class="t" style="left:-216px;width:400px;text-align:right;top:265.33px;font-size:12.6px;color:#000;-webkit-text-stroke:0.05px">53</div>
<div class="t" style="left:-135px;width:400px;text-align:right;top:265.33px;font-size:12.6px;color:#000;-webkit-text-stroke:0.05px">34534</div>
<div class="t" style="left:2px;top:284.00px;font-size:13px;color:#000;letter-spacing:0.45px;-webkit-text-stroke:0">Февраль</div>
<div class="t" style="left:-216px;width:400px;text-align:right;top:285.33px;font-size:12.6px;color:#000;-webkit-text-stroke:0.05px">54</div>
<div class="t" style="left:-135px;width:400px;text-align:right;top:285.33px;font-size:12.6px;color:#000;-webkit-text-stroke:0.05px">76345</div>
<div class="t" style="left:2px;top:304.00px;font-size:13px;color:#000;letter-spacing:0.45px;-webkit-text-stroke:0">Март</div>
<div class="t" style="left:-216px;width:400px;text-align:right;top:305.33px;font-size:12.6px;color:#000;-webkit-text-stroke:0.05px">345</div>
<div class="t" style="left:-135px;width:400px;text-align:right;top:305.33px;font-size:12.6px;color:#000;-webkit-text-stroke:0.05px">2653</div>
<div class="t" style="left:2px;top:324.00px;font-size:13px;color:#000;letter-spacing:0.45px;-webkit-text-stroke:0">Апрель</div>
<div class="t" style="left:-216px;width:400px;text-align:right;top:325.33px;font-size:12.6px;color:#000;-webkit-text-stroke:0.05px">34</div>
<div class="t" style="left:-135px;width:400px;text-align:right;top:325.33px;font-size:12.6px;color:#000;-webkit-text-stroke:0.05px">178000</div>
<div class="t" style="left:2px;top:344.00px;font-size:13px;color:#000;letter-spacing:0.45px;-webkit-text-stroke:0">Май</div>
<div class="t" style="left:-216px;width:400px;text-align:right;top:345.33px;font-size:12.6px;color:#000;-webkit-text-stroke:0.05px">43</div>
<div class="t" style="left:-135px;width:400px;text-align:right;top:345.33px;font-size:12.6px;color:#000;-webkit-text-stroke:0.05px">435</div>
<div class="t" style="left:2px;top:364.00px;font-size:13px;color:#000;letter-spacing:0.45px;-webkit-text-stroke:0">Июнь</div>
<div class="t" style="left:-216px;width:400px;text-align:right;top:365.33px;font-size:12.6px;color:#000;-webkit-text-stroke:0.05px">22</div>
<div class="t" style="left:-135px;width:400px;text-align:right;top:365.33px;font-size:12.6px;color:#000;-webkit-text-stroke:0.05px">4234</div>
<div class="t" style="left:2px;top:384.00px;font-size:13px;color:#000;letter-spacing:0.45px;-webkit-text-stroke:0">Июль</div>
<div class="t" style="left:-216px;width:400px;text-align:right;top:385.33px;font-size:12.6px;color:#000;-webkit-text-stroke:0.05px">43</div>
<div class="t" style="left:-135px;width:400px;text-align:right;top:385.33px;font-size:12.6px;color:#000;-webkit-text-stroke:0.05px">43543</div>
<div class="t" style="left:2px;top:404.00px;font-size:13px;color:#000;letter-spacing:0.45px;-webkit-text-stroke:0">Август</div>
<div class="t" style="left:-216px;width:400px;text-align:right;top:405.33px;font-size:12.6px;color:#000;-webkit-text-stroke:0.05px">5363</div>
<div class="t" style="left:-135px;width:400px;text-align:right;top:405.33px;font-size:12.6px;color:#000;-webkit-text-stroke:0.05px">45234</div>
<div class="t" style="left:2px;top:424.00px;font-size:13px;color:#000;letter-spacing:0.45px;-webkit-text-stroke:0">Сентябрь</div>
<div class="t" style="left:-216px;width:400px;text-align:right;top:425.33px;font-size:12.6px;color:#000;-webkit-text-stroke:0.05px">324</div>
<div class="t" style="left:-135px;width:400px;text-align:right;top:425.33px;font-size:12.6px;color:#000;-webkit-text-stroke:0.05px">543534</div>
<div class="t" style="left:2px;top:444.00px;font-size:13px;color:#000;letter-spacing:0.45px;-webkit-text-stroke:0">Октябрь</div>
<div class="t" style="left:-216px;width:400px;text-align:right;top:445.33px;font-size:12.6px;color:#000;-webkit-text-stroke:0.05px">31</div>
<div class="t" style="left:-135px;width:400px;text-align:right;top:445.33px;font-size:12.6px;color:#000;-webkit-text-stroke:0.05px">4524</div>
<div class="t" style="left:2px;top:464.00px;font-size:13px;color:#000;letter-spacing:0.45px;-webkit-text-stroke:0">Ноябрь</div>
<div class="t" style="left:-216px;width:400px;text-align:right;top:465.33px;font-size:12.6px;color:#000;-webkit-text-stroke:0.05px">78</div>
<div class="t" style="left:-135px;width:400px;text-align:right;top:465.33px;font-size:12.6px;color:#000;-webkit-text-stroke:0.05px">531908</div>
<div class="t" style="left:2px;top:484.00px;font-size:13px;color:#000;letter-spacing:0.45px;-webkit-text-stroke:0">Декабрь</div>
<div class="t" style="left:-216px;width:400px;text-align:right;top:485.33px;font-size:12.6px;color:#000;-webkit-text-stroke:0.05px">134</div>
<div class="t" style="left:-135px;width:400px;text-align:right;top:485.33px;font-size:12.6px;color:#000;-webkit-text-stroke:0.05px">234524</div>
<div class="t" style="left:38px;width:400px;text-align:right;top:5.33px;font-size:12.6px;color:#000;-webkit-text-stroke:0.05px">543534</div>
</div>
<div class="a" style="left:53px;top:250px;width:271px;height:3px;background:#217346;"></div>
<div class="a" style="left:53px;top:750px;width:271px;height:3px;background:#217346;"></div>
<div class="a" style="left:53px;top:250px;width:3px;height:503px;background:#217346;"></div>
<div class="a" style="left:321px;top:250px;width:3px;height:503px;background:#217346;"></div>
<div class="a" style="left:56px;top:252px;width:265px;height:1px;background:repeating-linear-gradient(90deg,#fff 0 2px,transparent 2px 9px)"></div>
<div class="a" style="left:56px;top:750px;width:265px;height:1px;background:repeating-linear-gradient(90deg,#fff 0 2px,transparent 2px 9px)"></div>
<div class="a" style="left:55px;top:254px;width:1px;height:496px;background:repeating-linear-gradient(180deg,#fff 0 2px,transparent 2px 9px)"></div>
<div class="a" style="left:321px;top:254px;width:1px;height:496px;background:repeating-linear-gradient(180deg,#fff 0 2px,transparent 2px 9px)"></div>
<div class="a" style="left:320px;top:749px;width:5px;height:5px;background:#217346;"></div>
<div class="a" style="left:893px;top:234px;width:15px;height:15px;background:#fff;border:1px solid #ababab"></div>
<div class="a" style="left:893px;top:249px;width:15px;height:476px;background:#fff;border:1px solid #ababab"></div>
<div class="a" style="left:894px;top:725px;width:13px;height:20px;background:#dadada;"></div>
<div class="a" style="left:893px;top:745px;width:15px;height:15px;background:#fff;border:1px solid #ababab"></div>
<svg style="left:0;top:0" width="1" height="1"><path d="M897 243.5 H904 L900.5 239.5 Z" fill="#606060"/><path d="M897 751 H904 L900.5 755 Z" fill="#606060"/></svg>
<div class="a" style="left:32px;top:759px;width:858px;height:1px;background:#ababab;"></div>
<svg style="left:0;top:0" width="1" height="1"><path d="M60 768.5 V776 L55.5 772.25 Z" fill="#c2c2c2"/><path d="M85 768.5 V776 L89.5 772.25 Z" fill="#c2c2c2"/></svg>
<div class="a" style="left:129px;top:763px;width:1px;height:20px;background:#a8a8a8;"></div>
<div class="t" style="top:766.84px;font-size:12px;color:#444;left:-41px;width:400px;text-align:center;">Лист2</div>
<div class="a" style="left:189px;top:759px;width:60px;height:25px;background:#fff;border-left:1px solid #ababab;border-right:1px solid #ababab"></div>
<div class="a" style="left:190px;top:781px;width:58px;height:3px;background:#217346;"></div>
<div class="t" style="top:766.84px;font-size:12px;color:#217346;font-weight:700;left:19px;width:400px;text-align:center;">Лист1</div>
<svg style="left:0;top:0" width="1" height="1"><circle cx="290" cy="772.5" r="7.5" fill="none" stroke="#7a7a7a" stroke-width="1.1"/><path d="M286 772.5 H294 M290 768.5 V776.5" stroke="#7a7a7a" stroke-width="1.4"/><rect x="558" y="768" width="2" height="2" fill="#a8a8a8"/><rect x="558" y="772" width="2" height="2" fill="#a8a8a8"/><rect x="558" y="776" width="2" height="2" fill="#a8a8a8"/></svg>
<div class="a" style="left:575px;top:766px;width:15px;height:15px;background:#fff;border:1px solid #ababab"></div>
<div class="a" style="left:590px;top:766px;width:260px;height:15px;background:#fff;border:1px solid #ababab"></div>
<div class="a" style="left:850px;top:767px;width:26px;height:13px;background:#dadada;"></div>
<div class="a" style="left:875px;top:766px;width:15px;height:15px;background:#fff;border:1px solid #ababab"></div>
<svg style="left:0;top:0" width="1" height="1"><path d="M584 770 V777 L580 773.5 Z" fill="#606060"/><path d="M881 770 V777 L885 773.5 Z" fill="#606060"/></svg>
<div class="a" style="left:32px;top:787px;width:878px;height:1px;background:#d0d0d0;"></div>
<div class="t" style="top:793.10px;font-size:11.7px;color:#444;left:37px;">Укажите</div>
<div class="t" style="top:793.69px;font-size:11px;color:#444;left:100px;">Scroll Lock</div>
<div class="t" style="top:793.69px;font-size:11px;color:#444;left:276px;">Среднее: 58835,5625</div>
<div class="t" style="top:793.43px;font-size:11.3px;color:#444;left:400px;">Количество: 75</div>
<div class="t" style="top:793.86px;font-size:10.8px;color:#444;left:496.5px;">Сумма: 2824107</div>
<svg style="left:0;top:0" width="1" height="1"><rect x="610.5" y="791.5" width="12" height="12" fill="none" stroke="#666"/><path d="M614.5 791.5 V803.5 M618.5 791.5 V803.5 M610.5 795.5 H622.5 M610.5 799.5 H622.5" stroke="#666"/><rect x="650.5" y="791.5" width="13" height="12" fill="none" stroke="#666"/><rect x="653.5" y="794.5" width="7" height="6" fill="none" stroke="#666"/><path d="M655 796.5 H659 M655 798.5 H659" stroke="#666"/><rect x="690.5" y="791.5" width="13" height="12" fill="none" stroke="#666"/><path d="M694.5 791.5 V798.5 H690.5 M698.5 791.5 V798.5 H694.5" fill="none" stroke="#666"/><path d="M722 797.5 H730" stroke="#777"/><path d="M736 797.5 H835" stroke="#999"/><path d="M786.5 795 V800" stroke="#777"/><path d="M840 797.5 H849 M844.5 793 V802" stroke="#777"/></svg>
<div class="t" style="top:793.86px;font-size:10.8px;color:#999;left:862px;">100 %</div>
<div class="a" style="left:349px;top:330.7px;width:255.6px;height:167.8px;border:4.4px solid #ff0000;border-radius:11px;box-shadow:2px 4px 7px rgba(0,0,0,0.4)"></div>
<div class="a" style="left:354px;top:334.5px;width:246px;height:159.5px;background:rgba(0,0,0,0.27);border-radius:4px"></div>
<div class="a" style="left:358px;top:339px;width:236px;height:151px;background:#f0f0f0;border:1px solid #474c57;border-top:none"></div>
<div class="a" style="left:358px;top:339px;width:236px;height:30px;background:#474c57;"></div>
<div class="t" style="top:349.01px;font-size:11.8px;color:#fff;letter-spacing:-0.05px;left:367.5px;">Создание таблицы</div>
<div class="t" style="top:348.00px;font-size:13px;color:#fff;left:325px;width:400px;text-align:center;-webkit-text-stroke:0">?</div>
<svg style="left:0;top:0" width="1" height="1"><path d="M565 349.5 L575 359.5 M575 349.5 L565 359.5" stroke="#fff" stroke-width="1.1"/></svg>
<div class="t" style="top:378.18px;font-size:11.6px;color:#111;left:365px;">Укажите расположение данных таблицы:</div>
<div class="a" style="left:365px;top:389px;width:6px;height:1px;background:#111;"></div>
<div class="a" style="left:389px;top:393px;width:192px;height:20px;background:#fff;border:1px solid #a5a5a5"></div>
<div class="a" style="left:393px;top:397px;width:67px;height:13px;background:#cccccc;"></div>
<div class="t" style="top:399.97px;font-size:10.2px;color:#111;letter-spacing:0.35px;left:394px;">=$A$1:$C$25</div>
<div class="a" style="left:460px;top:397px;width:1px;height:13px;background:#111;"></div>
<div class="a" style="left:559px;top:393px;width:22px;height:20px;background:#fff;border:2px solid #c4c4c4"></div>
<svg style="left:0;top:0" width="1" height="1"><path d="M570 402 V406.5" stroke="#111" stroke-width="1.8"/><path d="M565.5 403 L570 398.5 L574.5 403 Z" fill="#111"/><path d="M565.5 408.5 H574.5" stroke="#111" stroke-width="1"/></svg>
<div class="a" style="left:389px;top:424px;width:13px;height:13px;background:#fff;border:1px solid #333"></div>
<svg style="left:0;top:0" width="1" height="1"><path d="M391.5 430.5 L394.5 433.5 L400 427" fill="none" stroke="#333" stroke-width="1.1"/></svg>
<div class="t" style="top:425.22px;font-size:11.55px;color:#111;left:405.5px;">Таблица с заголовками</div>
<div class="a" style="left:406px;top:436px;width:6px;height:1px;background:#111;"></div>
<div class="a" style="left:428px;top:459px;width:74px;height:22px;background:#e1e1e1;border:2px solid #0078d7"></div>
<div class="t" style="top:464.27px;font-size:11.5px;color:#111;left:265px;width:400px;text-align:center;">OK</div>
<div class="a" style="left:512px;top:459px;width:74px;height:22px;background:#e1e1e1;border:1px solid #adadad"></div>
<div class="t" style="top:464.77px;font-size:11.5px;color:#111;left:348.5px;width:400px;text-align:center;">Отмена</div>
</body></html>
